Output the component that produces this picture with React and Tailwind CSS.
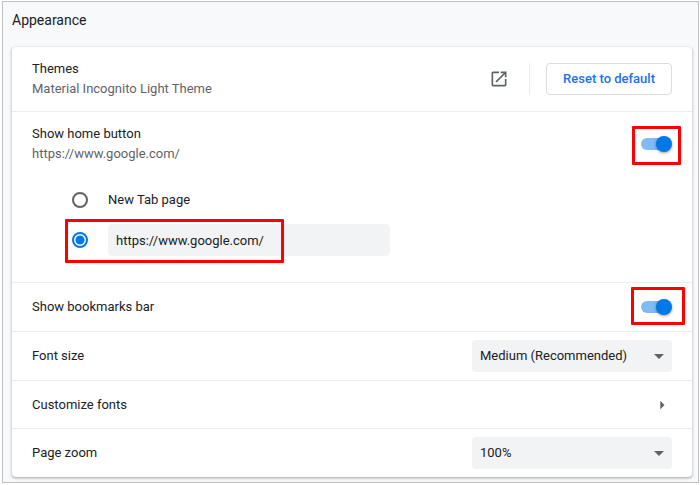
import { useState } from "react";

const Highlight = ({ className }) => (
  <span
    className={`absolute border-3 border-[#ff0000] rounded-[1px] pointer-events-none ${className}`}
    aria-hidden="true"
  />
);

const Toggle = ({ id, checked, onChange, highlight }) => (
  <div className="relative w-[34px] h-4 shrink-0">
    <input
      id={id}
      type="checkbox"
      role="switch"
      checked={checked}
      onChange={(e) => onChange(e.target.checked)}
      className="peer absolute inset-0 appearance-none cursor-pointer"
    />
    <span className="absolute left-[3px] top-0.5 w-7 h-3 rounded-full bg-[#bdc1c6] peer-checked:bg-[#80bbf3] pointer-events-none" />
    <span className="absolute left-0 top-0 size-4 rounded-full bg-white peer-checked:bg-[#0078e7] peer-checked:left-[18px] shadow-[0_1px_3px_rgba(0,0,0,0.4)] transition-all pointer-events-none" />
    <Highlight className={highlight} />
  </div>
);

const radioClasses =
  "size-4 shrink-0 appearance-none rounded-full border-2 border-[#5f6368] checked:border-[#0078e7] checked:bg-[radial-gradient(circle,#0078e7_4px,transparent_5px)]";

const Select = ({ id, options, value, onChange }) => (
  <div className="relative w-[200px] shrink-0">
    <select
      id={id}
      value={value}
      onChange={(e) => onChange(e.target.value)}
      className="w-full h-8 appearance-none rounded bg-[#f1f3f4] pl-2 pr-8 cursor-pointer"
    >
      {options.map((option) => (
        <option key={option}>{option}</option>
      ))}
    </select>
    <svg className="absolute right-0 top-1 size-6 fill-[#5f6368] pointer-events-none" viewBox="0 0 24 24">
      <path d="M6 10l5 5 5-5z" />
    </svg>
  </div>
);

const Row = ({ label, htmlFor, children }) => (
  <div className="box-content flex h-12 items-center justify-between px-5">
    <label htmlFor={htmlFor}>{label}</label>
    {children}
  </div>
);

const App = () => {
  const [homeButton, setHomeButton] = useState(true);
  const [homePage, setHomePage] = useState("custom");
  const [homeUrl, setHomeUrl] = useState("https://www.google.com/");
  const [bookmarksBar, setBookmarksBar] = useState(true);
  const [fontSize, setFontSize] = useState("Medium (Recommended)");
  const [zoom, setZoom] = useState("100%");

  return (
    <div className="mt-px mr-px mb-0.5 ml-0.5 border border-[#bfc1c4] bg-[#f8f9fa] pl-[9px] pr-1.5 pb-[5px] font-['Roboto',sans-serif] text-[13px] leading-5 text-[#202124]">
      <h2 className="pt-2 pb-[17px] text-sm leading-5">Appearance</h2>

      <div className="divide-y divide-[#ededed] rounded bg-white shadow-[0_1px_2px_rgba(60,64,67,0.3),0_1px_3px_1px_rgba(60,64,67,0.15)]">
        {/* Themes */}
        <div className="box-content flex h-16 items-center px-5">
          <div className="flex-1">
            <div>Themes</div>
            <div className="text-[#5f6368]">Material Incognito Light Theme</div>
          </div>
          <a href="#themes" aria-label="Open themes" className="mr-5">
            <svg className="size-5 fill-[#5f6368]" viewBox="0 0 24 24">
              <path d="M19 19H5V5h7V3H5c-1.110 0-2 .9-2 2v14c0 1.100.890 2 2 2h14c1.100 0 2-.9 2-2v-7h-2v7zM14 3v2h3.590l-9.830 9.830 1.410 1.410L19 6.410V10h2V3h-7z" />
            </svg>
          </a>
          <div className="h-8 border-l border-[#e8eaed] pl-4">
            <button className="h-8 rounded border border-[#dadce0] px-4 font-medium text-[#1a73e8]">
              Reset to default
            </button>
          </div>
        </div>

        {/* Home button */}
        <div>
          <div className="flex h-16 items-center justify-between px-5">
            <label htmlFor="home-button">
              <span className="block">Show home button</span>
              <span className="block text-[#5f6368]">https://www.google.com/</span>
            </label>
            <Toggle
              id="home-button"
              checked={homeButton}
              onChange={setHomeButton}
              highlight="-left-1.5 -right-[9px] -top-2.5 -bottom-[13px]"
            />
          </div>
          <div className="pl-[60px] pr-5 pt-1 pb-[22px]">
            <label className="flex h-10 items-center gap-5">
              <input
                type="radio"
                name="home-page"
                className={radioClasses}
                checked={homePage === "ntp"}
                onChange={() => setHomePage("ntp")}
              />
              New Tab page
            </label>
            <div className="relative flex h-10 items-center gap-5">
              <input
                type="radio"
                name="home-page"
                aria-label="Custom page"
                className={radioClasses}
                checked={homePage === "custom"}
                onChange={() => setHomePage("custom")}
              />
              <input
                type="text"
                aria-label="Custom page address"
                className="h-8 w-[282px] rounded bg-[#f1f3f4] px-2"
                value={homeUrl}
                onChange={(e) => setHomeUrl(e.target.value)}
              />
              <Highlight className="-left-[7px] -top-px w-[219px] h-11" />
            </div>
          </div>
        </div>

        <Row label="Show bookmarks bar" htmlFor="bookmarks-bar">
          <Toggle
            id="bookmarks-bar"
            checked={bookmarksBar}
            onChange={setBookmarksBar}
            highlight="-left-[7px] -right-[13px] -top-3 -bottom-2.5"
          />
        </Row>

        <Row label="Font size" htmlFor="font-size">
          <Select
            id="font-size"
            options={["Very small", "Small", "Medium (Recommended)", "Large", "Very large"]}
            value={fontSize}
            onChange={setFontSize}
          />
        </Row>

        <button className="flex h-12 w-full items-center justify-between px-5 text-left">
          Customize fonts
          <svg className="size-5 fill-[#5f6368]" viewBox="0 0 24 24">
            <path d="M10 7l5 5-5 5z" />
          </svg>
        </button>

        <Row label="Page zoom" htmlFor="page-zoom">
          <Select
            id="page-zoom"
            options={["50%", "75%", "90%", "100%", "110%", "125%", "150%", "200%"]}
            value={zoom}
            onChange={setZoom}
          />
        </Row>
      </div>
    </div>
  );
};

export default App;
